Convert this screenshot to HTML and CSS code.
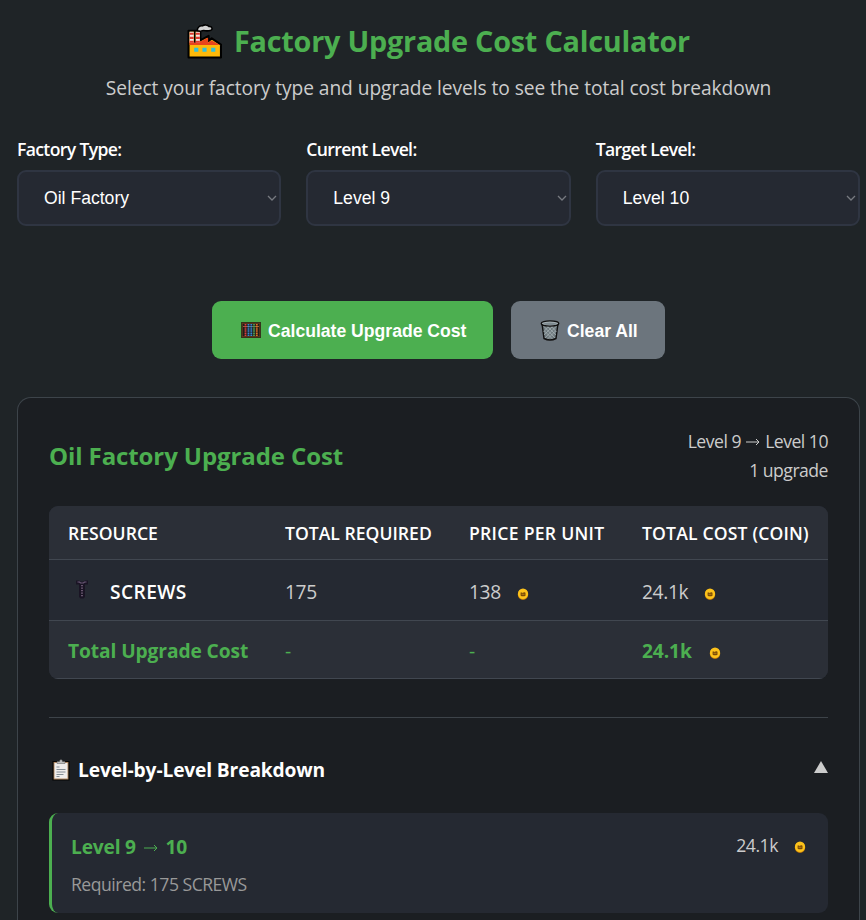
FILE: index.html
```
<!DOCTYPE html>
<html lang="en">
<head>
  <meta charset="UTF-8">
  <meta name="viewport" content="width=device-width, initial-scale=1.0">
  <title>Factory Upgrade Cost Calculator</title>
  <link rel="stylesheet" href="styles.css">
</head>
<body>

  <svg width="0" height="0" class="defs">
    <symbol id="coin" viewBox="0 0 12 12">
      <ellipse cx="6" cy="6.4" rx="5.2" ry="5.5" fill="#c47a08"/>
      <ellipse cx="6" cy="5.8" rx="5.1" ry="5.2" fill="#fcc21b"/>
      <path d="M3.6 4.6h1.5l.8.6 1-1.2 1.6.7v3L7.4 8.3H4.6l-1-.9z" fill="#7a4a08"/>
      <path d="M4.5 6.3h3" stroke="#d9980f" stroke-width=".7"/>
    </symbol>
  </svg>

  <div class="calculator">
    <header class="header">
      <h1>
        <svg class="icon-factory" viewBox="0 0 34 34">
          <path d="M1.500 32.500V6.500H13V16L21 11.500V16.500L24 14 33 20V32.500Z" fill="#fdb90a" stroke="#000" stroke-width="2" stroke-linejoin="round"/>
          <path d="M2.500 20.500V17H13L20.500 13V18L24 16 32 20.500Z" fill="#e8441c"/>
          <path d="M2.500 7.500H6.500V18H2.500ZM8.500 7.500H12.500V18H8.500Z" fill="#f4e9e4"/>
          <path d="M2.500 9.500h4M2.500 13.500h4M2.500 17.200h4M8.500 9.500h4M8.500 13.500h4M8.500 17.200h4" stroke="#e0392c" stroke-width="2"/>
          <path d="M7.500 6V18" stroke="#000" stroke-width="1.500"/>
          <path d="M10 6.500C10 3.500 12 1.500 15 1.800 17 .3 20 .6 21.500 2.500 24.500 2 25.500 5.800 22.500 6.300 19 7.500 17 5.700 15 6.500 13 8 12 6.500 10 6.500Z" fill="#d2d2d2" stroke="#000" stroke-width="1.500"/>
          <path d="M7 23h4v4H7ZM15 23h4v4h-4ZM23.500 23h4v4h-4Z" fill="#35c1d6"/>
        </svg>
        <span>Factory Upgrade Cost Calculator</span>
      </h1>
      <p>Select your factory type and upgrade levels to see the total cost breakdown</p>
    </header>

    <div class="controls">
      <div class="control">
        <label>Factory Type:</label>
        <div class="select">Oil Factory
          <svg viewBox="0 0 10 6"><path d="M1 1l4 4 4-4"/></svg>
        </div>
      </div>
      <div class="control">
        <label>Current Level:</label>
        <div class="select">Level 9
          <svg viewBox="0 0 10 6"><path d="M1 1l4 4 4-4"/></svg>
        </div>
      </div>
      <div class="control">
        <label>Target Level:</label>
        <div class="select">Level 10
          <svg viewBox="0 0 10 6"><path d="M1 1l4 4 4-4"/></svg>
        </div>
      </div>
    </div>

    <div class="buttons">
      <button class="btn btn-primary">
        <svg class="icon-abacus" viewBox="0 0 20 16">
          <path d="M1 1h18v14H1Z" fill="#201d1a" stroke="#6b3d1c" stroke-width="1.300"/>
          <path d="M.3.3h19.400v15.400H.3Z" fill="none" stroke="#17120e" stroke-width=".7"/>
          <path d="M2 4.500h16" stroke="#a8754b" stroke-width=".8"/>
          <g stroke-width="1.800" stroke-dasharray="1.500 .6">
            <path d="M4.500 2v12" stroke="#dc3d3d"/>
            <path d="M7.500 2v12" stroke="#3487d6"/>
            <path d="M10.300 2v12" stroke="#3487d6"/>
            <path d="M13 2v12" stroke="#4e9c52"/>
            <path d="M15.800 2v12" stroke="#e07224"/>
          </g>
        </svg>
        <span>Calculate Upgrade Cost</span>
      </button>
      <button class="btn btn-secondary">
        <svg class="icon-bin" viewBox="0 0 20 21">
          <path d="M2 3.500 4 18.500Q10 21.500 16 18.500L18 3.500Z" fill="#6f7a7f" stroke="#111" stroke-width="1.400"/>
          <path d="M3.500 6 15 18M7 6l9 9M11 6l5.500 6M4.500 11l8 8M16.500 6 5 18M13 6l-9 9M9 6l-5.500 6M15.500 11l-8 8" stroke="#a9b4b8" stroke-width=".7"/>
          <ellipse cx="10" cy="3.500" rx="8.800" ry="2.600" fill="#a5afb3" stroke="#111" stroke-width="1.300"/>
          <ellipse cx="10" cy="3.800" rx="6.800" ry="1.200" fill="#7f8b91"/>
        </svg>
        <span>Clear All</span>
      </button>
    </div>

    <section class="results">
      <div class="results-header">
        <h2>Oil Factory Upgrade Cost</h2>
        <div class="summary">
          <div class="range">Level 9 <svg class="arrow" viewBox="0 0 14 8"><path d="M0 4h13M10 1l3 3-3 3"/></svg> Level 10</div>
          <div class="count">1 upgrade</div>
        </div>
      </div>

      <table class="cost-table">
        <thead>
          <tr>
            <th class="col-resource">RESOURCE</th>
            <th class="col-required">TOTAL REQUIRED</th>
            <th class="col-price">PRICE PER UNIT</th>
            <th class="col-cost">TOTAL COST (COIN)</th>
          </tr>
        </thead>
        <tbody>
          <tr>
            <td>
              <div class="resource">
                <svg class="icon-screw" viewBox="0 0 14 20">
                  <path d="M1 1.500h3l1 1h4l1-1h3v4h-3v12.500L8.500 19.500H5.500L4 18V5.500H1Z" fill="#1a1424"/>
                  <path d="M2.500 3h2l1 1h3l1-1h2" stroke="#6b5977" stroke-width="1.200" fill="none"/>
                  <path d="M7 6v12" stroke="#68566f" stroke-width="2" stroke-dasharray="1.300 1.200"/>
                </svg>
                <span>SCREWS</span>
              </div>
            </td>
            <td>175</td>
            <td>138<svg class="coin"><use href="#coin"/></svg></td>
            <td>24.1k<svg class="coin"><use href="#coin"/></svg></td>
          </tr>
          <tr class="total">
            <td>Total Upgrade Cost</td>
            <td class="dash">-</td>
            <td class="dash">-</td>
            <td>24.1k<svg class="coin"><use href="#coin"/></svg></td>
          </tr>
        </tbody>
      </table>

      <div class="breakdown">
        <div class="breakdown-header">
          <h3>
            <svg class="icon-clipboard" viewBox="0 0 18 22">
              <path d="M1 2.500h16v18.500H1Z" fill="#b08863" stroke="#050505" stroke-width="1.200"/>
              <path d="M2.500 4h13v15.500h-13Z" fill="#eeeceb"/>
              <path d="M5 4.500V2.500h2.500C7.500 0 10.500 0 10.500 2.500H13v2Z" fill="#bdbdbd" stroke="#555" stroke-width=".5"/>
              <path d="M4.500 8h3M4.500 10.500h9M4.500 13h9M4.500 15.500h7M4.500 17.500h3" stroke="#76828a" stroke-width=".9"/>
            </svg>
            <span>Level-by-Level Breakdown</span>
          </h3>
          <svg class="toggle" viewBox="0 0 14 12"><path d="M7 0l7 12H0Z"/></svg>
        </div>

        <div class="level">
          <div class="level-top">
            <h4>Level 9 <svg class="arrow" viewBox="0 0 14 8"><path d="M0 4h13M10 1l3 3-3 3"/></svg> 10</h4>
            <div class="level-cost">24.1k<svg class="coin"><use href="#coin"/></svg></div>
          </div>
          <p>Required: 175 SCREWS</p>
        </div>
      </div>
    </section>
  </div>

</body>
</html>
```

FILE: styles.css
```
* {
  box-sizing: border-box;
}
body {
  margin: 0;
  height: 920px;
  overflow: hidden;
  background: #1f2427;
  color: #fff;
  font-family: "Open Sans", "Noto Sans", sans-serif;
}
h1, h2, h3, h4, p {
  margin: 0;
}
h1, h2, h3, h4, p, label, span, th, td, .summary {
  white-space: nowrap;
}
.defs {
  position: absolute;
}
.calculator {
  padding: 21px 6px 0 17px;
}
.header {
  text-align: center;
}
.header h1 {
  display: flex;
  justify-content: center;
  align-items: center;
  gap: 12px;
  height: 40px;
  color: #4caf50;
  font-size: 28.8px;
  letter-spacing: -0.23px;
}
.header h1 span {
  padding-bottom: 1px;
}
.icon-factory {
  width: 35px;
  height: 35px;
}
.header p {
  margin-top: 13px;
  line-height: 28px;
  color: #ccc;
  font-size: 19.2px;
  letter-spacing: -0.07px;
}
.controls {
  display: grid;
  grid-template-columns: repeat(3, 1fr);
  gap: 25px;
  margin-top: 35px;
}
.control label {
  display: block;
  line-height: 24px;
  font-size: 17.6px;
  font-weight: 600;
  letter-spacing: -0.65px;
}
.select {
  display: flex;
  align-items: center;
  justify-content: space-between;
  height: 56px;
  margin-top: 9px;
  padding: 0 2px 0 25px;
  background: #252932;
  border: 2px solid #2f3542;
  border-radius: 9px;
  font-family: "Liberation Sans", Arial, sans-serif;
  font-size: 17.6px;
}
.select svg {
  width: 10px;
  height: 6px;
  fill: none;
  stroke: #777a80;
  stroke-width: 1.3;
}
.buttons {
  display: flex;
  justify-content: center;
  gap: 18px;
  margin-top: 75px;
}
.btn {
  display: flex;
  align-items: center;
  height: 58px;
  padding: 0 0 0 29px;
  border: 0;
  border-radius: 9px;
  color: #fff;
  font-family: "Liberation Sans", Arial, sans-serif;
  font-size: 17.6px;
  font-weight: bold;
}
.btn span {
  padding-top: 2px;
}
.btn-primary {
  width: 281px;
  background: #4caf50;
}
.btn-secondary {
  width: 154px;
  background: #6c757d;
}
.icon-abacus {
  width: 20px;
  height: 16px;
  margin-right: 7px;
}
.icon-bin {
  width: 20px;
  height: 21px;
  margin-right: 7px;
}
.results {
  height: 523px;
  margin-top: 38px;
  padding: 29px 31px 0;
  background: #1b1e22;
  border: 1px solid #3d444a;
  border-bottom: 0;
  border-radius: 14px 14px 0 0;
}
.results-header {
  display: flex;
  justify-content: space-between;
  align-items: center;
  height: 58px;
}
.results-header h2 {
  padding-bottom: 2px;
  color: #4caf50;
  font-size: 24px;
  letter-spacing: -0.1px;
}
.summary {
  color: #ccc;
  font-size: 17.6px;
  line-height: 29px;
  text-align: right;
  letter-spacing: -0.5px;
}
.arrow {
  width: 14px;
  height: 8px;
  margin: 0 1px;
  fill: none;
  stroke: currentColor;
  stroke-width: 1;
  vertical-align: 2px;
}
.cost-table {
  width: 100%;
  margin-top: 21px;
  border-spacing: 0;
  border-radius: 9px;
  overflow: hidden;
  table-layout: fixed;
  background: #252932;
  color: #ccc;
  font-size: 19.2px;
}
.cost-table th,
.cost-table td {
  padding: 0 0 0 19px;
  border-bottom: 1px solid #414750;
  text-align: left;
}
.cost-table th {
  height: 54px;
  background: #2b2f37;
  color: #fff;
  font-size: 17.6px;
  font-weight: 600;
}
.cost-table td {
  height: 61px;
  padding-top: 2px;
  letter-spacing: -0.35px;
}
.col-resource {
  width: 217px;
}
.col-required {
  width: 184px;
}
.col-price {
  width: 173px;
  letter-spacing: 0.28px;
}
.col-cost {
  letter-spacing: 0.16px;
}
.resource {
  display: flex;
  align-items: center;
  color: #fff;
  font-weight: 600;
  letter-spacing: 0.4px;
}
.icon-screw {
  width: 14px;
  height: 20px;
  margin: 0 21px 4px 7px;
}
.coin {
  width: 12px;
  height: 12px;
  margin-left: 16px;
  vertical-align: -1px;
}
.cost-table .total td {
  height: 58px;
  background: #2b2f37;
  color: #4caf50;
  font-weight: bold;
  letter-spacing: -0.1px;
}
.cost-table .total .dash {
  font-weight: normal;
}
.total .coin {
  margin-left: 17px;
}
.breakdown {
  margin-top: 38px;
  border-top: 1px solid #3d4349;
}
.breakdown-header {
  display: flex;
  justify-content: space-between;
  align-items: center;
  height: 95px;
  padding-top: 8px;
}
.breakdown-header h3 {
  display: flex;
  align-items: center;
  font-size: 19.2px;
  letter-spacing: -0.14px;
}
.icon-clipboard {
  width: 18px;
  height: 22px;
  margin: 0 8px 0 3px;
}
.toggle {
  width: 14px;
  height: 12px;
  margin-bottom: 5px;
  fill: #ccc;
}
.level {
  height: 100px;
  padding: 19px 22px 0 19px;
  background: #252932;
  border-left: 3px solid #4caf50;
  border-radius: 9px;
}
.level-top {
  display: flex;
  justify-content: space-between;
  height: 30px;
  line-height: 30px;
}
.level h4 {
  color: #4caf50;
  font-size: 19.2px;
  letter-spacing: -0.2px;
}
.level h4 .arrow {
  width: 16px;
  margin: 0 2px;
}
.level-cost {
  color: #ccc;
  font-size: 17.6px;
  line-height: 27px;
  letter-spacing: -0.45px;
}
.level p {
  margin-top: 9px;
  line-height: 26px;
  color: #999;
  font-size: 17.6px;
  letter-spacing: -0.5px;
}
```
